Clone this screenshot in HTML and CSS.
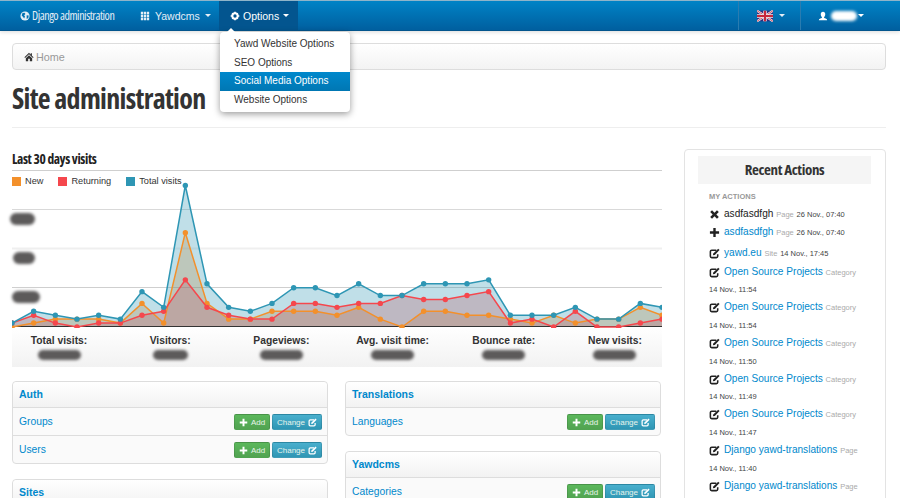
FILE: index.html
```html
<!DOCTYPE html>
<html lang="en">

<head>
  <meta charset="UTF-8">
  <meta name="viewport" content="width=device-width, initial-scale=1.0">
  <title>Site administration</title>
  <link rel="stylesheet" href="styles.css">
</head>

<body>
  <svg class="icon-defs" width="0" height="0">
    <symbol id="i-globe" viewBox="0 0 12 12">
      <circle cx="6" cy="6" r="5.5" fill="currentColor" />
      <path d="M3 2.5l2.5-.5 1 1.500-1.500 1.500 1 1.500-1 2.500-1.500-2-1.500-1.500zM8 5l2.500.5-.5 3-2 1z" fill="#0272b3" />
    </symbol>
    <symbol id="i-th" viewBox="0 0 12 12">
      <path d="M1 1h2.800v2.800H1zM4.600 1h2.800v2.800H4.600zM8.200 1H11v2.800H8.200zM1 4.600h2.800v2.800H1zM4.600 4.600h2.800v2.800H4.600zM8.200 4.600H11v2.800H8.200zM1 8.200h2.800V11H1zM4.600 8.200h2.800V11H4.600zM8.200 8.200H11V11H8.200z" fill="currentColor" />
    </symbol>
    <symbol id="i-cog" viewBox="0 0 12 12">
      <circle cx="6" cy="6" r="3.200" fill="none" stroke="currentColor" stroke-width="2.400" />
      <path d="M5 .8h2v2H5zM5 9.200h2v2H5zM.8 5h2v2h-2zM9.200 5h2v2h-2zM2 3.400l1.400-1.400 1.200 1.200-1.400 1.400zM8.600 2l1.400 1.400-1.200 1.200-1.400-1.400zM3.400 10L2 8.600l1.200-1.200 1.400 1.400zM10 8.600L8.600 10 7.400 8.800l1.400-1.400z" fill="currentColor" />
    </symbol>
    <symbol id="i-home" viewBox="0 0 12 12">
      <path d="M6 1L.5 6.300l.8.800L6 2.700l4.700 4.400.8-.8L9.500 4.400V1.500H8v1.500zM2.200 7.500V11h2.800V8h2v3h2.800V7.500L6 3.900z" fill="currentColor" />
    </symbol>
    <symbol id="i-user" viewBox="0 0 12 12">
      <path d="M6 1c1.800 0 2.700 1.300 2.700 3S7.800 7 7.300 7.500v.8c1.500.4 3.700 1 3.700 2.700H1c0-1.700 2.200-2.300 3.700-2.700v-.8C4.200 7 3.300 5.700 3.300 4S4.200 1 6 1z" fill="currentColor" />
    </symbol>
    <symbol id="i-plus" viewBox="0 0 12 12">
      <path d="M4.700 1h2.600v3.700H11v2.600H7.300V11H4.700V7.300H1V4.700h3.700z" fill="currentColor" />
    </symbol>
    <symbol id="i-cross" viewBox="0 0 12 12">
      <path d="M3.300 1.300L6 4l2.700-2.700 2 2L8 6l2.700 2.700-2 2L6 8l-2.700 2.700-2-2L4 6 1.300 3.300z" fill="currentColor" />
    </symbol>
    <symbol id="i-edit" viewBox="0 0 12 12">
      <path d="M8 2.400H3a1.500 1.500 0 0 0-1.500 1.500V9A1.500 1.500 0 0 0 3 10.500h5A1.500 1.500 0 0 0 9.500 9V6.800" fill="none" stroke="currentColor" stroke-width="1.700" />
      <path d="M10 .8l1.500 1.500L6.300 7.500 4.200 8l.5-2.100z" fill="currentColor" />
    </symbol>
  </svg>

  <header class="navbar">
    <a class="brand"><svg class="icon"><use href="#i-globe" /></svg>Django administration</a>
    <a class="nav-item nav-yawd"><svg class="icon"><use href="#i-th" /></svg>Yawdcms<span class="caret"></span></a>
    <div class="nav-item nav-options">
      <svg class="icon"><use href="#i-cog" /></svg>Options<span class="caret"></span>
      <ul class="dropdown">
        <li>Yawd Website Options</li>
        <li>SEO Options</li>
        <li class="active">Social Media Options</li>
        <li>Website Options</li>
      </ul>
    </div>
    <div class="nav-right">
      <div class="nav-lang">
        <svg class="flag" viewBox="0 0 60 40">
          <rect width="60" height="40" fill="#2b2f7f" />
          <path d="M0 0l60 40M60 0L0 40" stroke="#f3eef0" stroke-width="8" />
          <path d="M0 0l60 40M60 0L0 40" stroke="#c8283c" stroke-width="3" />
          <path d="M30 0v40M0 20h60" stroke="#f3eef0" stroke-width="13" />
          <path d="M30 0v40M0 20h60" stroke="#c8283c" stroke-width="8" />
        </svg>
        <span class="caret"></span>
      </div>
      <div class="nav-user">
        <svg class="icon"><use href="#i-user" /></svg>
        <span class="blur-white"></span>
        <span class="caret"></span>
      </div>
    </div>
  </header>

  <main class="page">
    <nav class="breadcrumb"><svg class="icon"><use href="#i-home" /></svg>Home</nav>
    <h1 class="title">Site administration</h1>

    <div class="columns">
      <section class="content">
        <h2 class="chart-title">Last 30 days visits</h2>
        <div class="chart">
          <svg id="visits" width="650" height="158"></svg>
          <ul class="legend">
            <li><i class="swatch new"></i>New</li>
            <li><i class="swatch returning"></i>Returning</li>
            <li><i class="swatch total"></i>Total visits</li>
          </ul>
          <span class="blur tick tick-1"></span>
          <span class="blur tick tick-2"></span>
          <span class="blur tick tick-3"></span>
        </div>

        <div class="stats">
          <div class="stats-row">
            <div class="stat">Total visits:<span class="blur"></span></div>
            <div class="stat">Visitors:<span class="blur blur-short"></span></div>
            <div class="stat">Pageviews:<span class="blur"></span></div>
            <div class="stat">Avg. visit time:<span class="blur"></span></div>
            <div class="stat">Bounce rate:<span class="blur"></span></div>
            <div class="stat">New visits:<span class="blur"></span></div>
          </div>
        </div>

        <div class="apps">
          <div class="app-col">
            <div class="panel">
              <div class="panel-head">Auth</div>
              <div class="panel-row">
                <a>Groups</a>
                <span class="btn btn-add"><svg class="icon"><use href="#i-plus" /></svg>Add</span>
                <span class="btn btn-change">Change<svg class="icon"><use href="#i-edit" /></svg></span>
              </div>
              <div class="panel-row">
                <a>Users</a>
                <span class="btn btn-add"><svg class="icon"><use href="#i-plus" /></svg>Add</span>
                <span class="btn btn-change">Change<svg class="icon"><use href="#i-edit" /></svg></span>
              </div>
            </div>
            <div class="panel">
              <div class="panel-head">Sites</div>
            </div>
          </div>
          <div class="app-col">
            <div class="panel">
              <div class="panel-head">Translations</div>
              <div class="panel-row">
                <a>Languages</a>
                <span class="btn btn-add"><svg class="icon"><use href="#i-plus" /></svg>Add</span>
                <span class="btn btn-change">Change<svg class="icon"><use href="#i-edit" /></svg></span>
              </div>
            </div>
            <div class="panel">
              <div class="panel-head">Yawdcms</div>
              <div class="panel-row">
                <a>Categories</a>
                <span class="btn btn-add"><svg class="icon"><use href="#i-plus" /></svg>Add</span>
                <span class="btn btn-change">Change<svg class="icon"><use href="#i-edit" /></svg></span>
              </div>
            </div>
          </div>
        </div>
      </section>

      <aside class="sidebar">
        <h3 class="sidebar-head">Recent Actions</h3>
        <h4 class="sidebar-sub">MY ACTIONS</h4>
        <ul class="actions">
          <li><svg class="icon"><use href="#i-cross" /></svg><span class="deleted">asdfasdfgh</span> <small>Page</small> <time>26 Nov., 07:40</time></li>
          <li><svg class="icon"><use href="#i-plus" /></svg><a>asdfasdfgh</a> <small>Page</small> <time>26 Nov., 07:40</time></li>
          <li class="gap"><svg class="icon"><use href="#i-edit" /></svg><a>yawd.eu</a> <small>Site</small> <time>14 Nov., 17:45</time></li>
          <li><svg class="icon"><use href="#i-edit" /></svg><a>Open Source Projects</a> <small>Category</small> <time>14 Nov., 11:54</time></li>
          <li><svg class="icon"><use href="#i-edit" /></svg><a>Open Source Projects</a> <small>Category</small> <time>14 Nov., 11:54</time></li>
          <li><svg class="icon"><use href="#i-edit" /></svg><a>Open Source Projects</a> <small>Category</small> <time>14 Nov., 11:50</time></li>
          <li><svg class="icon"><use href="#i-edit" /></svg><a>Open Source Projects</a> <small>Category</small> <time>14 Nov., 11:49</time></li>
          <li><svg class="icon"><use href="#i-edit" /></svg><a>Open Source Projects</a> <small>Category</small> <time>14 Nov., 11:47</time></li>
          <li><svg class="icon"><use href="#i-edit" /></svg><a>Django yawd-translations</a> <small>Page</small> <time>14 Nov., 11:40</time></li>
          <li><svg class="icon"><use href="#i-edit" /></svg><a>Django yawd-translations</a> <small>Page</small></li>
        </ul>
      </aside>
    </div>
  </main>

  <script src="chart.js"></script>
</body>

</html>
```

FILE: styles.css
```css
* {
  box-sizing: border-box;
}

html,
body {
  height: 498px;
  overflow: hidden;
}

body {
  margin: 0;
  font-family: "Liberation Sans", Arial, sans-serif;
  font-size: 11px;
  color: #333;
  background: #fff;
}

ul {
  margin: 0;
  padding: 0;
  list-style: none;
}

a {
  color: #0088cc;
}

.icon-defs {
  position: absolute;
}

.icon {
  width: 10px;
  height: 10px;
  flex: none;
}

.caret {
  display: inline-block;
  margin-left: 6px;
  border-top: 3px solid currentColor;
  border-left: 3px solid transparent;
  border-right: 3px solid transparent;
  vertical-align: middle;
}

/* navbar */
.navbar {
  display: flex;
  align-items: stretch;
  height: 31px;
  padding-left: 20px;
  color: #e4eef6;
  font-size: 10.500px;
  background: linear-gradient(to bottom, #0083c6, #005f9f);
  border-top: 1px solid #8fb4c9;
  border-bottom: 1px solid #03558d;
  box-shadow: 0 1px 4px rgba(0, 0, 0, 0.15);
}

.navbar a {
  color: inherit;
}

.brand {
  display: flex;
  align-items: center;
  gap: 2px;
  width: 119px;
  font-family: "Open Sans", sans-serif;
  font-stretch: condensed;
  font-size: 12px;
  letter-spacing: -0.45px;
  color: #cfe0ec;
}

.nav-item {
  display: flex;
  align-items: center;
  gap: 5px;
  height: 100%;
}

.nav-yawd {
  width: 80px;
  padding-left: 1px;
}

.nav-yawd .caret {
  margin-left: 0;
}

.nav-options {
  position: relative;
  width: 79px;
  padding-left: 11px;
  gap: 3px;
  color: #fff;
  background: #03558f;
}

.nav-options .caret {
  margin-left: 1px;
}

.dropdown {
  position: absolute;
  top: 31px;
  left: 1px;
  width: 130px;
  padding: 3px 0;
  font-size: 10px;
  color: #333;
  background: #fff;
  border-radius: 4px;
  box-shadow: 0 2px 7px rgba(0, 0, 0, 0.4);
  z-index: 5;
}

.dropdown::before {
  content: "";
  position: absolute;
  top: -4px;
  left: 7px;
  border-bottom: 4px solid #fff;
  border-left: 4px solid transparent;
  border-right: 4px solid transparent;
}

.dropdown li {
  height: 18.500px;
  line-height: 18.500px;
  padding-left: 14px;
}

.dropdown .active {
  color: #fff;
  background: linear-gradient(to bottom, #0088cc, #0077b3);
}

.nav-right {
  display: flex;
  margin-left: auto;
  padding-right: 31px;
}

.nav-lang {
  display: flex;
  align-items: center;
  width: 63px;
  padding-left: 18px;
  border-left: 1px solid #2a7cb0;
  border-right: 1px solid #2a7cb0;
}

.flag {
  width: 16px;
  height: 12px;
}

.nav-user {
  display: flex;
  align-items: center;
  width: 68px;
  padding-left: 17px;
  color: #fff;
}

.nav-user .caret {
  margin-left: 1px;
}

.blur-white {
  width: 26px;
  height: 10px;
  margin-left: 3px;
  background: #fff;
  border-radius: 5px;
  filter: blur(1.500px);
}

/* page */
.page {
  padding: 12px 14px 0 12px;
}

.breadcrumb {
  display: flex;
  align-items: center;
  gap: 2px;
  height: 27px;
  padding-left: 11px;
  font-size: 10.800px;
  color: #999;
  background: linear-gradient(to bottom, #fff, #f3f3f3);
  border: 1px solid #ddd;
  border-radius: 4px;
}

.breadcrumb .icon {
  color: #333;
}

.title {
  height: 58px;
  margin: 0;
  font-family: "Open Sans", sans-serif;
  font-stretch: condensed;
  font-size: 28px;
  font-weight: 700;
  line-height: 56px;
  letter-spacing: -0.700px;
  color: #333;
  border-bottom: 1px solid #eee;
}

.columns {
  display: grid;
  grid-template-columns: 650px 202px;
  column-gap: 22px;
  padding-top: 21px;
}

.chart-title {
  height: 21px;
  margin: 0;
  font-family: "Open Sans", sans-serif;
  font-stretch: condensed;
  font-size: 13.500px;
  font-weight: 700;
  line-height: 20px;
  letter-spacing: -0.400px;
  color: #222;
}

.chart {
  position: relative;
  height: 157px;
}

#visits {
  display: block;
}

.legend {
  position: absolute;
  top: 5px;
  left: 0;
  display: flex;
  gap: 15px;
  font-size: 9.200px;
  line-height: 12px;
}

.legend li {
  display: flex;
  align-items: center;
  gap: 4px;
}

.swatch {
  width: 9px;
  height: 9px;
}

.swatch.new {
  background: #f3902b;
}

.swatch.returning {
  background: #f5474d;
}

.swatch.total {
  background: #2e96b4;
}

.blur {
  display: block;
  background: #5c5a5a;
  border-radius: 7px;
  filter: blur(1.500px);
}

.tick {
  position: absolute;
  left: -2px;
  width: 25px;
  height: 12px;
}

.tick-1 {
  top: 43px;
}

.tick-2 {
  top: 82px;
  left: 1px;
  width: 22px;
}

.tick-3 {
  top: 121px;
  left: 0;
  width: 28px;
}

.stats {
  height: 40px;
  margin-bottom: 14px;
  background: linear-gradient(to bottom, #fff, #f2f2f2);
}

.stats-row {
  display: grid;
  grid-template-columns: repeat(6, 1fr);
  margin: 0 -8.600px;
  padding-top: 8px;
}

.stat {
  font-size: 10.300px;
  font-weight: 700;
  line-height: 12px;
  text-align: center;
  color: #333;
}

.stat .blur {
  width: 43px;
  height: 10px;
  margin: 3px auto 0;
}

.stat .blur-short {
  width: 35px;
}

.apps {
  display: grid;
  grid-template-columns: 316px 316px;
  column-gap: 17px;
}

.panel {
  margin-bottom: 15px;
  background: #fafafa;
  border: 1px solid #ddd;
  border-radius: 4px;
}

.panel-head {
  height: 26px;
  padding-left: 6px;
  font-size: 10.500px;
  font-weight: 700;
  line-height: 25px;
  color: #0088cc;
  background: linear-gradient(to bottom, #fff, #f2f2f2);
  border-radius: 4px 4px 0 0;
  border-bottom: 1px solid #ddd;
}

.panel-row {
  display: flex;
  align-items: center;
  gap: 2px;
  height: 28px;
  padding: 1px 5px 0 6px;
  font-size: 10.300px;
  border-bottom: 1px solid #ddd;
}

.panel-row:last-child {
  height: 27px;
  border-bottom: 0;
}

.panel-row a {
  margin-right: auto;
  padding-bottom: 2px;
}

.btn {
  display: flex;
  align-items: center;
  justify-content: center;
  gap: 3px;
  height: 16px;
  font-size: 8px;
  color: #e8f3ea;
  border-radius: 2px;
  border: 1px solid rgba(0, 0, 0, 0.1);
}

.btn .icon {
  width: 9px;
  height: 9px;
  color: #fff;
}

.btn-add {
  width: 36px;
  background: linear-gradient(to bottom, #5bb75b, #51a351);
}

.btn-change {
  width: 50px;
  background: linear-gradient(to bottom, #49afcd, #2f96b4);
}

/* sidebar */
.sidebar {
  height: 360px;
  padding: 6px 14px 0 13px;
  background: #fff;
  border: 1px solid #e3e3e3;
  border-radius: 4px;
}

.sidebar-head {
  height: 28px;
  margin: 0;
  font-family: "Open Sans", sans-serif;
  font-stretch: condensed;
  font-size: 15px;
  font-weight: 700;
  line-height: 27px;
  letter-spacing: -0.400px;
  text-align: center;
  color: #333;
  background: #f5f5f5;
}

.sidebar-sub {
  margin: 8px 0 0 11px;
  font-size: 7.500px;
  font-weight: 700;
  line-height: 9px;
  color: #999;
}

.actions {
  margin: 4px 0 0 11px;
  width: 152px;
}

.actions li {
  font-size: 10.100px;
  line-height: 17.850px;
}

.actions .gap {
  margin-top: 3px;
  margin-bottom: 1px;
}

.actions .icon {
  width: 11px;
  height: 11px;
  margin: -2px 4px -2px 0;
  color: #222;
  vertical-align: -1px;
}

.deleted {
  color: #222;
}

.actions small {
  font-size: 7.500px;
  line-height: 1;
  color: #aaa;
}

.actions time {
  font-size: 7.500px;
  line-height: 1;
  color: #444;
}
```

FILE: chart.js
```js
const svg = document.getElementById('visits')
const ns = 'http://www.w3.org/2000/svg'
const base = 157
const step = 650 / 30
const unit = 3.93

const series = [
  { color: '#f3902b', fill: 'rgba(243, 144, 43, 0.3)', data: [0, 1, 2, 2, 2, 1, 6, 1, 24, 6, 2, 2, 4, 4, 4, 3, 5, 2, 0, 4, 4, 3, 3, 2, 1, 3, 1, 2, 2, 5, 3] },
  { color: '#f5474d', fill: 'rgba(245, 71, 77, 0.3)', data: [1, 3, 1, 0, 1, 1, 3, 4, 12, 5, 3, 2, 2, 6, 6, 5, 6, 6, 8, 7, 7, 8, 9, 1, 2, 0, 4, 0, 0, 1, 2] },
  { color: '#2e96b4', fill: 'rgba(46, 150, 180, 0.3)', data: [1, 4, 3, 2, 3, 2, 9, 5, 36, 11, 5, 4, 6, 10, 10, 8, 11, 8, 8, 11, 11, 11, 12, 3, 3, 3, 5, 2, 2, 6, 5] }
]

function add(name, attrs) {
  const el = document.createElementNS(ns, name)
  for (const key in attrs) {
    el.setAttribute(key, attrs[key])
  }
  svg.appendChild(el)
}

// grid lines, the one in the middle is lighter in the reference
const grid = [
  { y: 0.5, color: '#cfcfcf', width: 1 },
  { y: 39.5, color: '#d9d9d9', width: 1 },
  { y: 78.5, color: '#efefef', width: 2 },
  { y: 117.5, color: '#cfcfcf', width: 1 }
]
for (const g of grid) {
  add('line', { x1: 0, x2: 650, y1: g.y, y2: g.y, stroke: g.color, 'stroke-width': g.width })
}

for (const s of series) {
  const pts = s.data.map((v, i) => [i * step, base - v * unit])
  const line = pts.map(p => p[0].toFixed(1) + ',' + p[1].toFixed(1)).join(' ')
  add('polygon', { points: '0,' + base + ' ' + line + ' 650,' + base, fill: s.fill })
}

add('line', { x1: 0, x2: 650, y1: 156.5, y2: 156.5, stroke: '#333', 'stroke-width': 1 })

for (const s of series) {
  const pts = s.data.map((v, i) => [i * step, base - v * unit])
  const line = pts.map(p => p[0].toFixed(1) + ',' + p[1].toFixed(1)).join(' ')
  add('polyline', { points: line, fill: 'none', stroke: s.color, 'stroke-width': 1.5 })
  for (const p of pts) {
    add('circle', { cx: p[0], cy: p[1], r: 2.7, fill: s.color })
  }
}
```
